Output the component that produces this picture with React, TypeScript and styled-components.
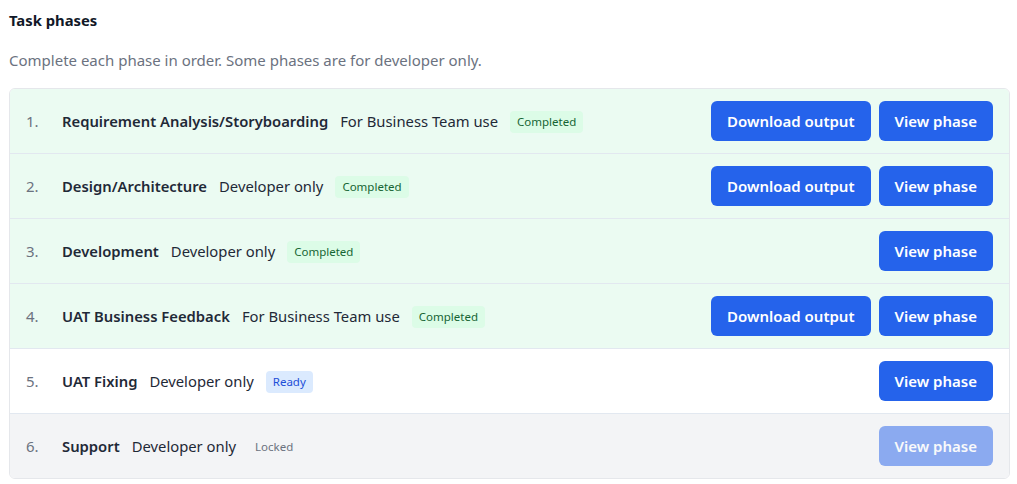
import styled, { createGlobalStyle } from "styled-components";

const GlobalStyle = createGlobalStyle`
    body {
        margin: 0;
        background: #fff;
        font-family: "Noto Sans", "Open Sans", sans-serif;
        color: #111827;
    }
`

const Page = styled.div`
    padding: 9px 7px 0 9px;
`

const Heading = styled.h2`
    margin: 0;
    font-size: 14.8px;
    font-weight: 700;
    line-height: 22px;
    color: #111827;
`

const Subtitle = styled.p`
    margin: 18px 0 17px;
    font-size: 15px;
    line-height: 22px;
    color: #6b7280;
`

const Card = styled.div`
    border: 1px solid #e5e7eb;
    border-radius: 6px;
    overflow: hidden;
`

type Status = "completed" | "ready" | "locked"

const rowBg: Record<Status, string> = {
    completed: "#ebfbf2",
    ready: "#ffffff",
    locked: "#f3f4f6",
}

const Row = styled.div<{ $status: Status }>`
    height: 64px;
    display: flex;
    align-items: center;
    padding: 0 16px;
    background: ${p => rowBg[p.$status]};
    & + & {
        border-top: 1px solid #e2e8f0;
    }
`

const Num = styled.span`
    width: 36px;
    font-size: 15px;
    color: #6b7280;
`

const Title = styled.span`
    font-size: 14.8px;
    font-weight: 600;
    color: #1f2937;
    margin-right: 12px;
`

const Audience = styled.span`
    font-size: 14.8px;
    color: #1f2937;
    margin-right: 12px;
`

const badgeColors: Record<Status, [string, string]> = {
    completed: ["#dcfce7", "#166534"],
    ready: ["#dbeafe", "#1d4ed8"],
    locked: ["transparent", "#6b7280"],
}

const Badge = styled.span<{ $status: Status }>`
    font-size: 11.5px;
    line-height: 22px;
    padding: 0 7px;
    margin-top: 1px;
    border-radius: 4px;
    background: ${p => badgeColors[p.$status][0]};
    color: ${p => badgeColors[p.$status][1]};
`

const Actions = styled.div`
    margin-left: auto;
    display: flex;
    gap: 8px;
`

const Button = styled.button`
    height: 40px;
    padding: 0 16px;
    border: none;
    border-radius: 6px;
    background: #2563eb;
    color: #fff;
    font-family: inherit;
    font-size: 15px;
    font-weight: 600;
    cursor: pointer;
    &:disabled {
        opacity: 0.5;
        cursor: default;
    }
`

const phases: { name: string; audience: string; status: Status; download?: boolean }[] = [
    { name: "Requirement Analysis/Storyboarding", audience: "For Business Team use", status: "completed", download: true },
    { name: "Design/Architecture", audience: "Developer only", status: "completed", download: true },
    { name: "Development", audience: "Developer only", status: "completed" },
    { name: "UAT Business Feedback", audience: "For Business Team use", status: "completed", download: true },
    { name: "UAT Fixing", audience: "Developer only", status: "ready" },
    { name: "Support", audience: "Developer only", status: "locked" },
]

const statusLabel: Record<Status, string> = {
    completed: "Completed",
    ready: "Ready",
    locked: "Locked",
}

export default function App() {
    return (
        <Page>
            <GlobalStyle />
            <Heading>Task phases</Heading>
            <Subtitle>Complete each phase in order. Some phases are for developer only.</Subtitle>
            <Card>
                {phases.map((p, i) => (
                    <Row key={p.name} $status={p.status}>
                        <Num>{i + 1}.</Num>
                        <Title>{p.name}</Title>
                        <Audience>{p.audience}</Audience>
                        <Badge $status={p.status}>{statusLabel[p.status]}</Badge>
                        <Actions>
                            {p.download && <Button>Download output</Button>}
                            <Button disabled={p.status === "locked"}>View phase</Button>
                        </Actions>
                    </Row>
                ))}
            </Card>
        </Page>
    )
}
